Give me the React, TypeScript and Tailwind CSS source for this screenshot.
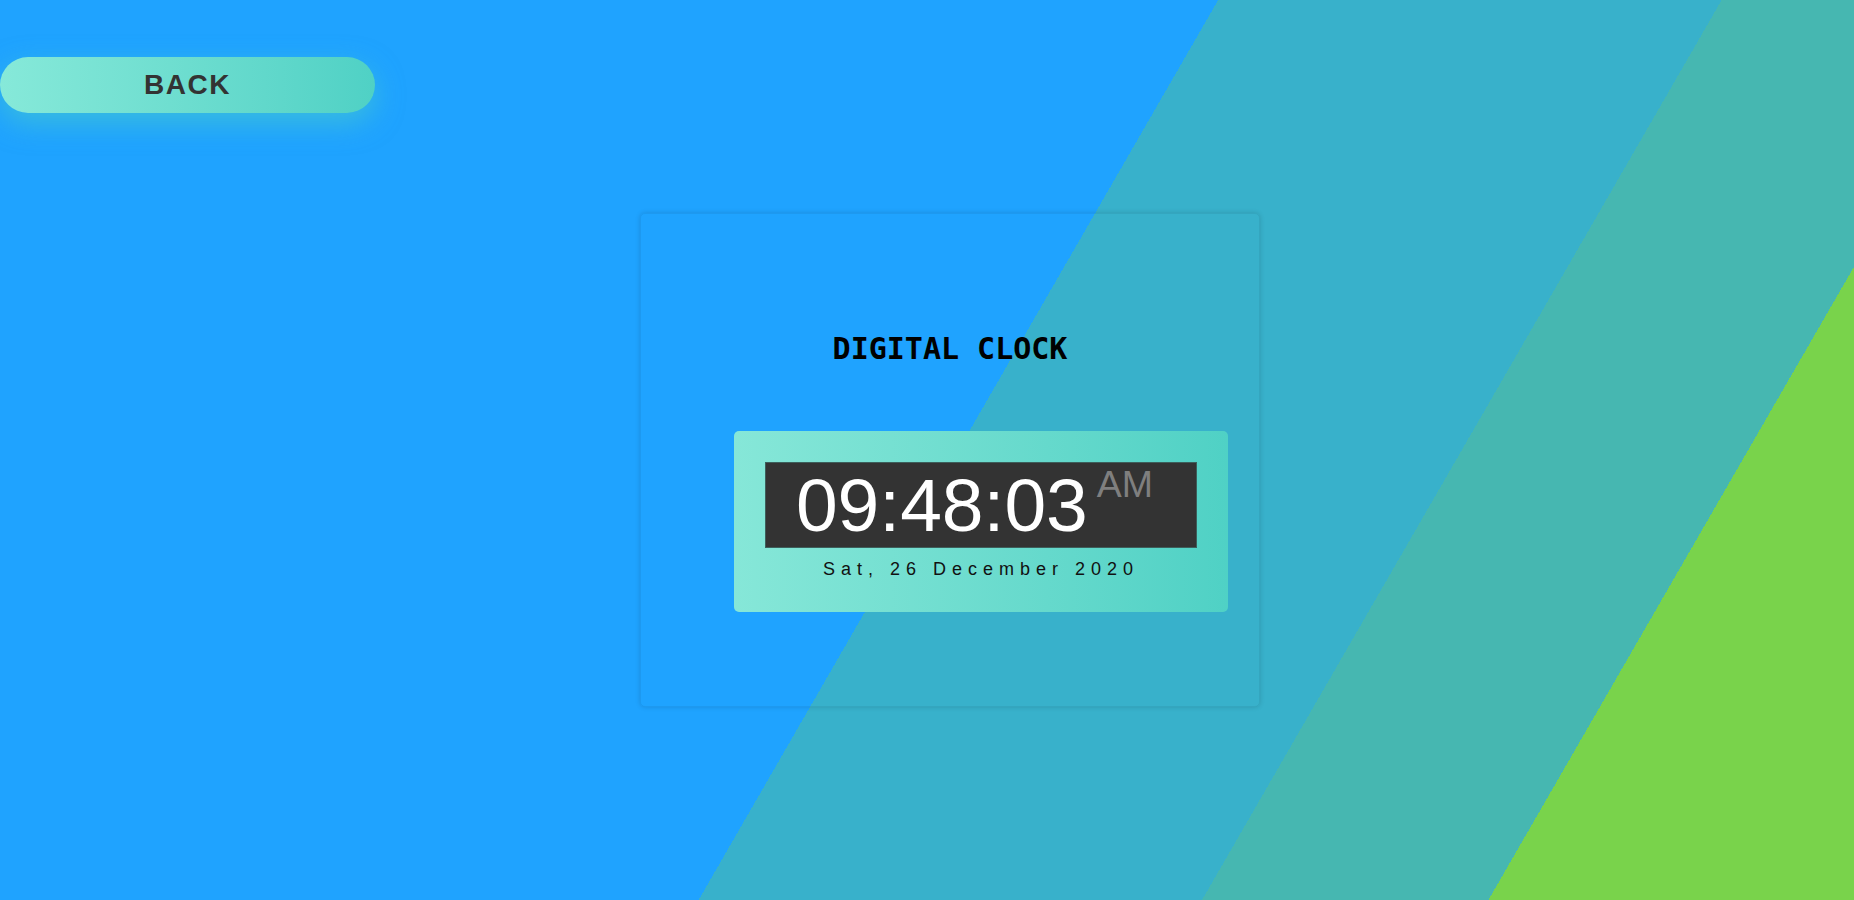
import React from "react";

export default function App() {
  return (
    <div
      className="w-full h-[900px] overflow-hidden bg-[linear-gradient(120deg,#1fa3ff_1055px,#38b1cb_1055px,#38b1cb_1491px,#46b7b1_1491px,#46b7b1_1739px,#79d34b_1739px)]"
      style={{ fontFamily: '"Liberation Sans", Arial, sans-serif' }}
    >
      <div className="pt-[57px]">
        <button className="flex items-center justify-center w-[375px] h-[56px] rounded-full bg-gradient-to-r from-[#86e9d9] to-[#4fd1c5] shadow-[0_10px_28px_rgba(79,209,197,0.55)] text-[28px] font-bold tracking-[1.5px] text-[#333]">
          BACK
        </button>
      </div>

      <div className="ml-[640px] mt-[100px] w-[620px] h-[494px] rounded-[5px] border border-[rgba(0,0,0,0.06)] shadow-[0_0_5px_rgba(0,0,0,0.15)] flex flex-col">
        <h1
          className="mt-[120px] text-center text-[30px] leading-[30px] font-bold text-black"
          style={{ fontFamily: '"DejaVu Sans Mono", monospace' }}
        >
          DIGITAL CLOCK
        </h1>

        <div className="ml-[93px] mt-[67px] w-[494px] rounded-[5px] bg-gradient-to-r from-[#86e7d8] to-[#4fd1c5] pt-[31px] pb-[34px] px-[31px] flex flex-col items-center">
          <div className="w-[432px] h-[86px] bg-[#333333] border border-[#3d5f5b] flex items-center justify-center pr-[13px]">
            <div className="flex items-start">
              <span className="text-[75px] leading-[75px] text-white">09:48:03</span>
              <span className="ml-[9px] -mt-[2px] text-[37.5px] leading-[37.5px] text-[#7f7f7f]">AM</span>
            </div>
          </div>
          <div className="mt-[12px] text-[18px] leading-[18px] tracking-[6px] text-[#111] text-center w-full">
            Sat, 26 December 2020
          </div>
        </div>
      </div>
    </div>
  );
}
